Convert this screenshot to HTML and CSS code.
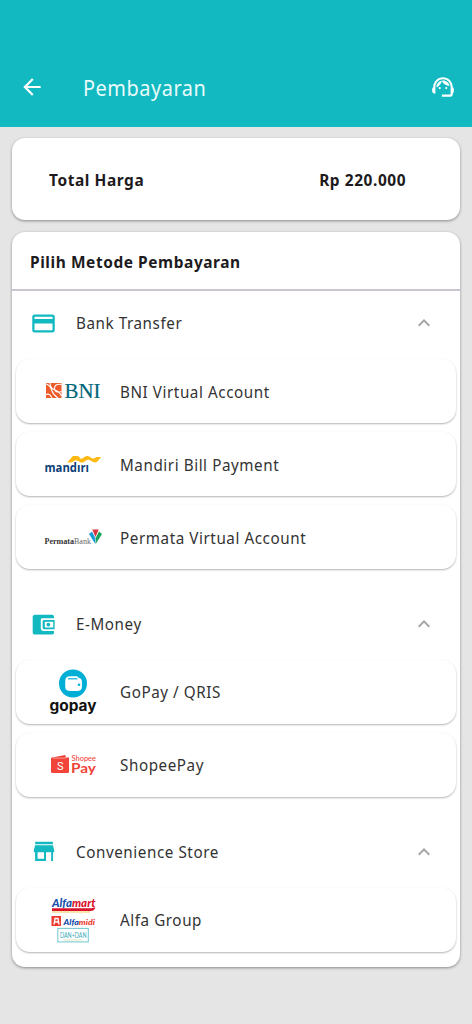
FILE: index.html
```html
<!DOCTYPE html>
<html lang="id">
<head>
  <meta charset="UTF-8">
  <meta name="viewport" content="width=device-width, initial-scale=1">
  <title>Pembayaran</title>
  <link rel="stylesheet" href="styles.css">
</head>
<body>
  <header class="topbar">
    <svg class="icon-back" viewBox="0 0 24 24"><path d="M20 11H7.830l5.590-5.590L12 4l-8 8 8 8 1.410-1.410L7.830 13H20v-2z"/></svg>
    <h1>Pembayaran</h1>
    <svg class="icon-agent" viewBox="0 0 24 24"><path d="M21 12.220C21 6.730 16.740 3 12 3c-4.690 0-9 3.650-9 9.280-.6.340-1 .980-1 1.720v2c0 1.100.9 2 2 2h1v-6.100c0-3.870 3.130-7 7-7s7 3.130 7 7V19h-8v2h8c1.100 0 2-.9 2-2v-1.220c.590-.310 1-.920 1-1.640v-2.300c0-.7-.410-1.310-1-1.620z"/><circle cx="9" cy="13" r="1"/><circle cx="15" cy="13" r="1"/><path d="M18 11.030C17.520 8.180 15.040 6 12.050 6c-3.030 0-6.290 2.510-6.030 6.450 2.470-1.010 4.330-3.210 4.860-5.890 1.310 2.630 4 4.440 7.120 4.470z"/></svg>
  </header>

  <main>
    <section class="card total">
      <span>Total Harga</span>
      <span class="price">Rp 220.000</span>
    </section>

    <section class="card methods">
      <h2><span>Pilih Metode Pembayaran</span></h2>

      <div class="group">
        <div class="group-head">
          <svg class="group-icon" viewBox="0 0 24 24"><path d="M20 4H4c-1.110 0-1.990.890-1.990 2L2 18c0 1.110.890 2 2 2h16c1.110 0 2-.890 2-2V6c0-1.110-.890-2-2-2zm0 14H4v-6h16v6zm0-10H4V6h16v2z"/></svg>
          <span class="label">Bank Transfer</span>
          <svg class="chevron" viewBox="0 0 24 24"><path d="M12 8l-6 6 1.410 1.410L12 10.830l4.590 4.580L18 14z"/></svg>
        </div>
        <div class="item">
          <svg class="logo" viewBox="0 0 60 48">
            <rect x="3" y="16" width="15.500" height="15" fill="#ee5a28"/>
            <path d="M3 17c4 1 5 4 6 7s3 5 6 7M7 16c0 4 2 6 5 7s5 3 6.500 6M18.500 17.500c-5-1-7 1-7 4s3 4.500 7 3M3 27.500c3-1 4 0 6 3.500" fill="none" stroke="#fff" stroke-width="1.100"/>
            <text class="bni" x="21.500" y="31" textLength="36" lengthAdjust="spacingAndGlyphs">BNI</text>
          </svg>
          <span class="label">BNI Virtual Account</span>
        </div>
        <div class="item">
          <svg class="logo" viewBox="0 0 60 48">
            <path d="M24.300 22.500l4.700-5.500c.5-.7 1-.9 2-.9h3.500c1.500 0 2 2.700 3.500 2.700s3.500-2.900 6-2.900c3 0 4 2.700 6.500 2.700 1.500 0 2-1.500 3.500-1.500h4.300l-4 4.300c-1 1-2 1.200-3.300.9-2.500-.6-3.500-2.600-6-2.600s-3.500 3-6 3-3.500-2.400-6-2.400c-2 0-2.500 2.200-4.700 2.200z" fill="#fdb913"/>
            <text class="mandiri" x="1.500" y="32" textLength="44.500" lengthAdjust="spacingAndGlyphs">mandırı</text>
          </svg>
          <span class="label">Mandiri Bill Payment</span>
        </div>
        <div class="item">
          <svg class="logo" viewBox="0 0 60 48">
            <text class="permata" x="1.500" y="31" textLength="46.500" lengthAdjust="spacingAndGlyphs">Permata<tspan class="bank">Bank</tspan></text>
            <path d="M49.300 16.500h6.400l-3.200 7.500z" fill="#d8343f"/>
            <path d="M46 21l3-2.500 3.300 6.500v6z" fill="#1c9ad6"/>
            <path d="M59 21l-3-2.500-3.300 6.500v6z" fill="#1aa35c"/>
          </svg>
          <span class="label">Permata Virtual Account</span>
        </div>
      </div>

      <div class="group">
        <div class="group-head">
          <svg class="group-icon" viewBox="-.5 -.5 25 25"><path d="M10.500 6.200h11.200V4.500c0-.9-.7-1.600-1.600-1.600H4C2.900 2.900 2 3.800 2 4.900v14.400c0 1.100.9 2 2 2h16.100c.9 0 1.600-.7 1.600-1.600V18H12c-1.500 0-2.500-1-2.500-2.500V8c0-1 .4-1.800 1-1.800z"/><path fill-rule="evenodd" d="M12.500 7.800h9.800v8.600h-9.800c-.8 0-1.300-.5-1.300-1.300v-6c0-.8.500-1.300 1.300-1.300zm.7 1.600v5.400H21V9.400z"/><circle cx="16.500" cy="12.100" r="1.700"/></svg>
          <span class="label">E-Money</span>
          <svg class="chevron" viewBox="0 0 24 24"><path d="M12 8l-6 6 1.410 1.410L12 10.830l4.590 4.580L18 14z"/></svg>
        </div>
        <div class="item">
          <svg class="logo" viewBox="0 0 60 48">
            <circle cx="30" cy="15.500" r="14" fill="#00aed6"/>
            <path d="M22.200 13.500c0-3.200 1.200-5 4-5.200h7c1.500 0 2.400.7 2.400 1.800 2.200.2 3.300 1.300 3.300 3.500v5c0 3-1.200 4.300-4.200 4.300h-8.200c-3 0-4.300-1.300-4.300-4.300z" fill="#fff"/>
            <path d="M25 10.800h9.500" stroke="#00aed6" stroke-width="1.200" fill="none"/>
            <circle cx="36" cy="16.800" r="1.300" fill="#00aed6"/>
            <text class="gopay" x="6.500" y="43" textLength="47" lengthAdjust="spacingAndGlyphs">gopay</text>
          </svg>
          <span class="label">GoPay / QRIS</span>
        </div>
        <div class="item">
          <svg class="logo" viewBox="0 0 60 48">
            <path d="M9 16.500l13.500-2.500v2.500H26V24H8v-6.500z" fill="#ee3b30"/>
            <rect x="8" y="17" width="18" height="15" rx="1.300" fill="#f2453a"/>
            <path d="M10 17h13" stroke="#fff" stroke-width=".5"/>
            <text class="shopee-s" x="14" y="28.500">S</text>
            <text class="shopee" x="28.500" y="20" textLength="24.500" lengthAdjust="spacingAndGlyphs">Shopee</text>
            <text class="shopee pay" x="28" y="31.500" textLength="25" lengthAdjust="spacingAndGlyphs">Pay</text>
          </svg>
          <span class="label">ShopeePay</span>
        </div>
      </div>

      <div class="group">
        <div class="group-head">
          <svg class="group-icon" viewBox="-1.500 .3 26 26"><path d="M20.500 3h-17v2.300h17zM21.800 13v-1.800l-1.200-4.800H3.400L2.200 11.200V13h1.200v8.500h10.500V13h5v8.500h1.800V13zM12 19.200H5.800V13H12z"/></svg>
          <span class="label">Convenience Store</span>
          <svg class="chevron" viewBox="0 0 24 24"><path d="M12 8l-6 6 1.410 1.410L12 10.830l4.590 4.580L18 14z"/></svg>
        </div>
        <div class="item">
          <svg class="logo" viewBox="0 0 60 48">
            <text class="alfa" x="9" y="10.500" textLength="43.500" lengthAdjust="spacingAndGlyphs">Alfa<tspan class="red">mart</tspan></text>
            <path d="M9 12.300h37c3 0 4-.8 6.500-.8-1 2.500-2.500 3.500-5 3.500H9z" fill="#d9132b"/>
            <path d="M9 16h38" stroke="#f5c342" stroke-width=".9"/>
            <rect x="8.500" y="20" width="9.500" height="10" fill="#ee3b30"/>
            <path d="M11 28.500l1-6h3l1 6M12 26h3" fill="none" stroke="#fff" stroke-width="1.400"/>
            <text class="alfa small" x="20.500" y="28.500" textLength="31.500" lengthAdjust="spacingAndGlyphs">Alfa<tspan class="midi">midi</tspan></text>
            <rect x="14.800" y="32.400" width="30.500" height="13.500" fill="#fff" stroke="#70c6d2" stroke-width="1"/>
            <text class="dandan" x="17" y="42" textLength="26.500" lengthAdjust="spacingAndGlyphs">DAN+DAN</text>
            <path d="M21 44h18" stroke="#cfd9a8" stroke-width=".7"/>
          </svg>
          <span class="label">Alfa Group</span>
        </div>
      </div>
    </section>
  </main>
</body>
</html>
```
FILE: styles.css
```css
* {
  box-sizing: border-box;
}

body {
  margin: 0;
  min-height: 1024px;
  background: #e5e5e5;
  color: #333;
  font-family: "Noto Sans", sans-serif;
  font-size: 16px;
  letter-spacing: 0.6px;
}

.topbar {
  display: flex;
  align-items: center;
  height: 127px;
  padding: 47px 16px 0 19px;
  background: #12b9c1;
  color: #e9fbfb;
}

.topbar svg {
  fill: #fff;
}

.icon-back {
  width: 26px;
  height: 26px;
}

.topbar h1 {
  flex: 1;
  margin: 0 0 0 38px;
  font-size: 22px;
  font-weight: 400;
  transform: scaleX(0.905);
  transform-origin: left;
}

.icon-agent {
  width: 26px;
  height: 26px;
}

main {
  padding: 11px 12px 0;
}

.card {
  margin-bottom: 12px;
  border-radius: 13px;
  background: #fff;
  box-shadow: 0 1px 3px rgba(0, 0, 0, 0.4);
}

.total {
  display: flex;
  justify-content: space-between;
  align-items: center;
  height: 82px;
  padding: 1px 54px 0 37px;
  color: #1d1b20;
  font-weight: 700;
}

.total span,
.methods h2 span {
  display: inline-block;
  transform: scaleX(0.965);
  transform-origin: left;
}

.total .price {
  transform-origin: right;
}

.methods {
  padding-bottom: 15px;
}

.methods h2 {
  height: 59px;
  margin: 0;
  padding-left: 18px;
  border-bottom: 2px solid #cac4d0;
  color: #1d1b20;
  font-size: 16px;
  line-height: 60px;
}

.group + .group {
  margin-top: 23px;
}

.group-head {
  display: flex;
  align-items: center;
  height: 64px;
  margin-bottom: 4px;
  padding: 0 24px 0 18px;
}

.group-icon {
  width: 27px;
  height: 27px;
  margin-right: 19px;
  fill: #12b9c1;
}

.label {
  transform: scaleX(0.95);
  transform-origin: left;
}

.chevron {
  width: 24px;
  height: 24px;
  margin-left: auto;
  fill: #a5a5a5;
}

.item {
  display: flex;
  align-items: center;
  height: 64px;
  margin: 0 4px;
  padding-left: 27px;
  border-radius: 14px;
  background: #fff;
  box-shadow: 0 1px 2px rgba(0, 0, 0, 0.3);
}

.item + .item {
  margin-top: 9px;
}

.group:nth-of-type(1) .item .label {
  padding-top: 1px;
}

.logo {
  width: 60px;
  height: 48px;
  margin-right: 17px;
  letter-spacing: 0;
}

.bni {
  fill: #006679;
  font: 22px "Liberation Serif", serif;
  stroke: #006679;
  stroke-width: 0.2;
}

.mandiri {
  fill: #0c4078;
  font: bold 12.5px "Open Sans", sans-serif;
}

.permata {
  fill: #333;
  font: bold 8.5px "Liberation Serif", serif;
}

.bank {
  fill: #666;
  font-weight: 400;
}

.gopay {
  fill: #111;
  font: bold 15px Inter, sans-serif;
}

.shopee-s {
  fill: #fff;
  font: 11px Roboto, sans-serif;
}

.shopee {
  fill: #f2453a;
  font: 500 7px Lato, sans-serif;
}

.shopee.pay {
  font-size: 14px;
  font-weight: 700;
}

.alfa {
  fill: #164fae;
  font: italic 900 11px Lato, sans-serif;
}

.red {
  fill: #d9132b;
}

.alfa.small {
  font-size: 8px;
}

.midi {
  fill: #ee3b30;
}

.dandan {
  fill: #38a9b9;
  font: 8px Lato, sans-serif;
}
```
